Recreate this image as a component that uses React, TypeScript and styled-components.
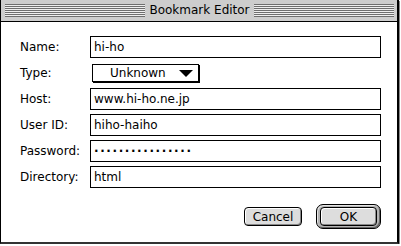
import React from 'react'
import styled, { createGlobalStyle } from 'styled-components'

const GlobalStyle = createGlobalStyle`
  html, body {
    margin: 0;
    padding: 0;
    background: #fff;
  }
  body {
    font-family: "DejaVu Sans", "Liberation Sans", sans-serif;
    font-size: 12px;
    color: #000;
  }
`

interface Field {
  label: string
  value?: string
  secret?: boolean
  popup?: boolean
}

const fields: Field[] = [
  { label: 'Name:', value: 'hi-ho' },
  { label: 'Type:', value: 'Unknown', popup: true },
  { label: 'Host:', value: 'www.hi-ho.ne.jp' },
  { label: 'User ID:', value: 'hiho-haiho' },
  { label: 'Password:', value: '················', secret: true },
  { label: 'Directory:', value: 'html' }
]

export default function App() {
  return (
    <>
      <GlobalStyle />
      <Window>
        <TitleBar>
          <Stripes />
          <Title>Bookmark Editor</Title>
          <Stripes />
        </TitleBar>
        <Content>
          <Form>
            {fields.map(f => (
              <React.Fragment key={f.label}>
                <Label>{f.label}</Label>
                {f.popup ? (
                  <PopupCell>
                    <Popup>
                      <span>{f.value}</span>
                      <svg width="14" height="7" viewBox="0 0 14 7">
                        <polygon points="0,0 14,0 7,7" fill="#000" />
                      </svg>
                    </Popup>
                  </PopupCell>
                ) : (
                  <TextField $secret={f.secret}>{f.value}</TextField>
                )}
              </React.Fragment>
            ))}
          </Form>
          <ButtonRow>
            <Button>Cancel</Button>
            <DefaultRing>
              <Button $wide>OK</Button>
            </DefaultRing>
          </ButtonRow>
        </Content>
      </Window>
    </>
  )
}

const Window = styled.div`
  width: 399px;
  height: 244px;
  box-sizing: border-box;
  background: #fff;
  border-left: 1px solid #000;
  border-right: 2px solid #000;
  border-bottom: 2px solid #333;
  box-shadow: 1px 1px 0 #888;
  display: flex;
  flex-direction: column;
`

const TitleBar = styled.div`
  height: 21px;
  box-sizing: content-box;
  background: #cdcdcd;
  border-bottom: 1px solid #000;
  display: flex;
  align-items: center;
  gap: 3px;
  padding: 0 3px 0 4px;
`

const Stripes = styled.div`
  flex: 1;
  height: 13px;
  background: repeating-linear-gradient(
    to bottom,
    #6e6e6e 0,
    #6e6e6e 1px,
    #eeeeee 1px,
    #eeeeee 2px
  );
`

const Title = styled.div`
  font-size: 12px;
  line-height: 21px;
  padding: 0 1px;
`

const Content = styled.div`
  flex: 1;
  display: flex;
  flex-direction: column;
  padding: 14px 16px 0 19px;
`

const Form = styled.div`
  display: grid;
  grid-template-columns: 70px 291px;
  grid-auto-rows: 22px;
  row-gap: 4px;
  align-items: center;
`

const Label = styled.div`
  font-size: 12px;
  line-height: 22px;
`

const TextField = styled.div<{ $secret?: boolean }>`
  height: 22px;
  box-sizing: border-box;
  border: 1px solid #000;
  padding: 0 3px;
  display: flex;
  align-items: center;
  font-size: 12px;
  white-space: pre;
  font-weight: ${p => (p.$secret ? 'bold' : 'normal')};
  letter-spacing: ${p => (p.$secret ? '1.6px' : 'normal')};
`

const PopupCell = styled.div`
  height: 22px;
  display: flex;
  align-items: center;
`

const Popup = styled.div`
  margin-left: 2px;
  width: 107px;
  height: 18px;
  box-sizing: border-box;
  border: 1px solid #000;
  box-shadow: 1px 1px 0 #000;
  background: #fff;
  display: flex;
  align-items: center;
  justify-content: space-between;
  padding: 0 5px 0 17px;
  font-size: 12px;
`

const ButtonRow = styled.div`
  margin-top: 16px;
  display: flex;
  justify-content: flex-end;
  align-items: center;
  gap: 14px;
`

const Button = styled.div<{ $wide?: boolean }>`
  width: ${p => (p.$wide ? '57px' : '58px')};
  height: 19px;
  box-sizing: border-box;
  border: 1px solid #000;
  border-radius: 4px;
  background: #dddddd;
  box-shadow: inset 1px 1px 0 #fff, inset -1px -1px 0 #888;
  display: flex;
  align-items: center;
  justify-content: center;
  font-size: 12px;
`

const DefaultRing = styled.div`
  border: 1px solid #000;
  border-radius: 7px;
  padding: 2px 3px;
  background: #b4b4b4;
  box-shadow: inset 1px 1px 0 #e4e4e4, inset -1px -1px 0 #666;
`
